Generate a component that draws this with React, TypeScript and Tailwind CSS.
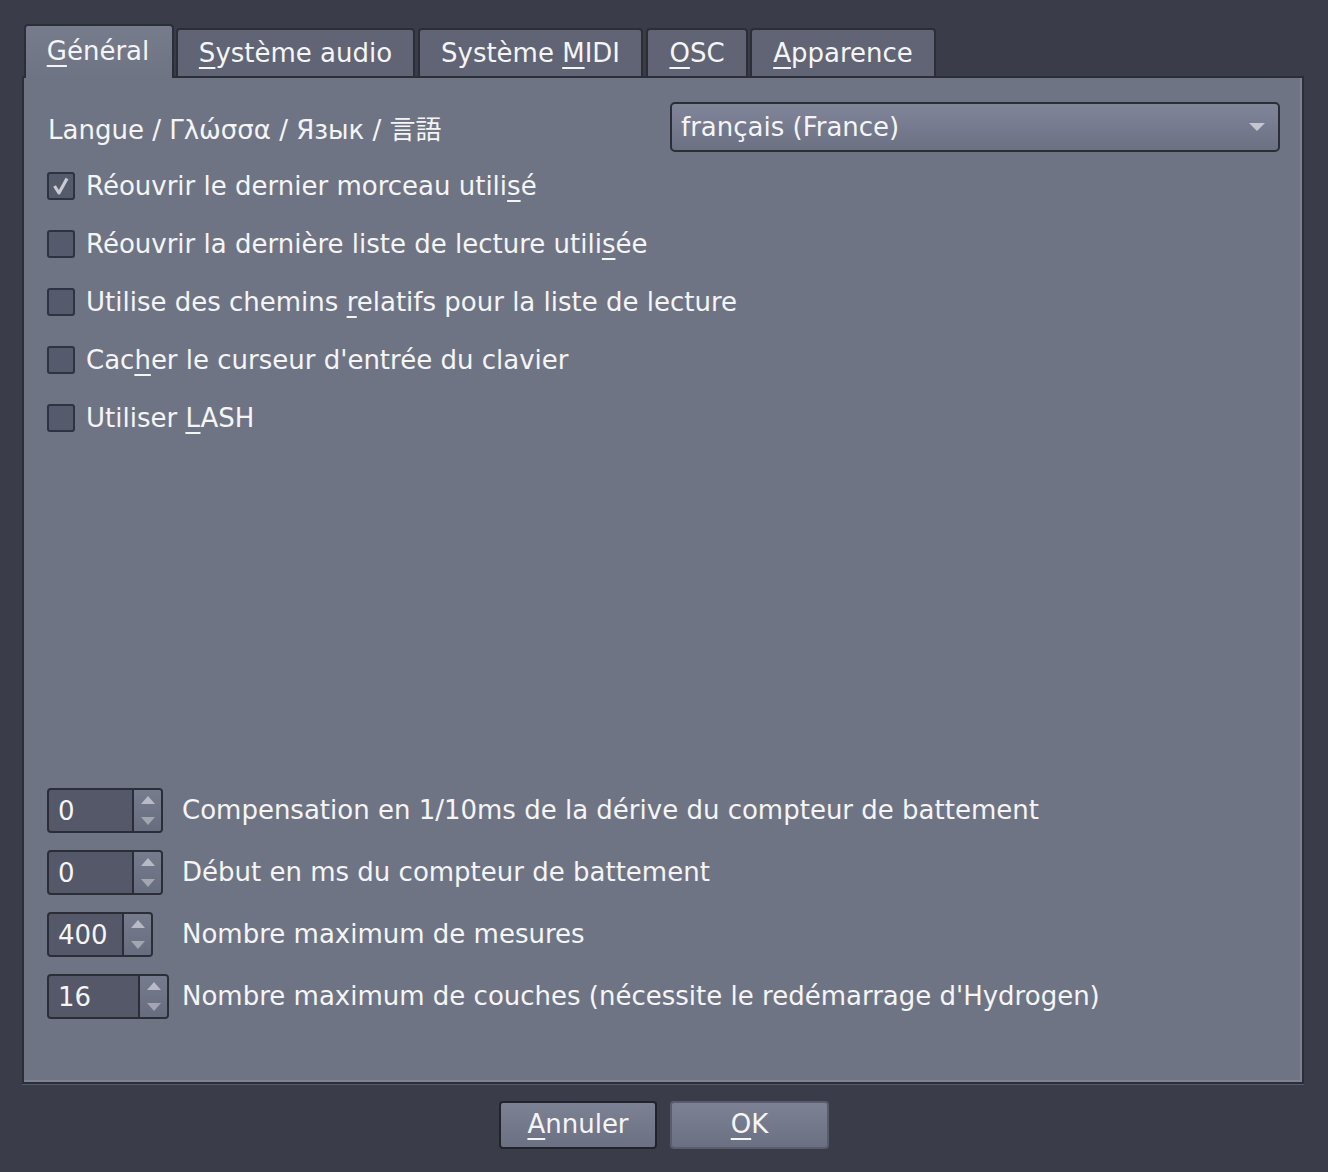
import React from "react";

const font = "font-['DejaVu_Sans','Noto_Sans_CJK_JP',sans-serif]";

function M({ children }: { children: React.ReactNode }) {
  return <span className="underline decoration-2 underline-offset-[5px]">{children}</span>;
}

const tabs = [
  { key: "gen", w: "w-[150px]", label: <><M>G</M>énéral</>, active: true },
  { key: "audio", w: "w-[239px] ml-[2px]", label: <><M>S</M>ystème audio</> },
  { key: "midi", w: "w-[225px] ml-[3px]", label: <>Système <M>M</M>IDI</> },
  { key: "osc", w: "w-[102px] ml-[3px]", label: <><M>O</M>SC</> },
  { key: "app", w: "w-[186px] ml-[2px]", label: <><M>A</M>pparence</> },
];

const checks = [
  { label: <>Réouvrir le dernier morceau utili<M>s</M>é</>, on: true },
  { label: <>Réouvrir la dernière liste de lecture utili<M>s</M>ée</> },
  { label: <>Utilise des chemins <M>r</M>elatifs pour la liste de lecture</> },
  { label: <>Cac<M>h</M>er le curseur d'entrée du clavier</> },
  { label: <>Utiliser <M>L</M>ASH</> },
];

const spins = [
  { value: "0", w: "w-[116px]", label: "Compensation en 1/10ms de la dérive du compteur de battement" },
  { value: "0", w: "w-[116px]", label: "Début en ms du compteur de battement" },
  { value: "400", w: "w-[106px]", label: "Nombre maximum de mesures" },
  { value: "16", w: "w-[122px]", label: "Nombre maximum de couches (nécessite le redémarrage d'Hydrogen)" },
];

function Checkbox({ on }: { on?: boolean }) {
  return (
    <div className="flex h-[28px] w-[28px] shrink-0 items-center justify-center rounded-[3px] border-2 border-[#2f3240] bg-[#555a6c]">
      {on && (
        <svg width="20" height="20" viewBox="0 0 20 20">
          <path d="M3.5 10 L8 17 L16 2.5" fill="none" stroke="#c9cbd2" strokeWidth="3.2" strokeLinejoin="round" />
        </svg>
      )}
    </div>
  );
}

function SpinBox({ value, w }: { value: string; w: string }) {
  return (
    <div className={`flex h-[45px] ${w} overflow-hidden rounded-[4px] border-2 border-[#2b2d37] bg-[#545869]`}>
      <div className="flex flex-1 items-center pl-[9px] leading-none">{value}</div>
      <div className="flex w-[29px] flex-col border-l-2 border-[#2b2d37] bg-gradient-to-b from-[#767b8d] to-[#676c7e]">
        <div className="flex flex-1 items-center justify-center">
          <svg width="14" height="8" viewBox="0 0 14 8"><path d="M0 8 L7 0 L14 8 Z" fill="#b8bbc5" /></svg>
        </div>
        <div className="flex flex-1 items-center justify-center">
          <svg width="14" height="8" viewBox="0 0 14 8"><path d="M0 0 L14 0 L7 8 Z" fill="#a3a6b1" /></svg>
        </div>
      </div>
    </div>
  );
}

export default function App() {
  return (
    <div className={`flex h-[1172px] w-[1328px] flex-col bg-[#3a3d49] pl-[22px] pr-[24px] pt-[24px] text-[26px] text-[#f5f5f5] ${font}`}>
      <div className="relative z-10 -mb-[2px] flex h-[54px] items-end pl-[2px]">
        {tabs.map((t) =>
          t.active ? (
            <div
              key={t.key}
              className={`flex h-[54px] ${t.w} items-start justify-center rounded-t-[4px] border-2 border-b-0 border-[#2b2d37] bg-gradient-to-b from-[#777c8d] to-[#6f7485] pr-[2px] pt-[6px]`}
            >
              <span>{t.label}</span>
            </div>
          ) : (
            <div
              key={t.key}
              className={`flex h-[50px] ${t.w} items-center justify-center rounded-t-[4px] border-2 border-[#2b2d37] bg-[#606475]`}
            >
              <span>{t.label}</span>
            </div>
          )
        )}
      </div>

      <div className="flex h-[1008px] flex-col border-2 border-[#2b2d37] bg-[#6f7485] pl-[23px] pr-[22px] pt-[24px] pb-[63px] shadow-[inset_-2px_-2px_0_#7d8295]">
        <div className="flex h-[50px] items-center justify-between">
          <div className="pl-[1px] pt-[6px]">Langue / Γλώσσα / Язык / 言語</div>
          <div className="flex h-[50px] w-[610px] items-center justify-between rounded-[5px] border-2 border-[#2b2d37] bg-gradient-to-b from-[#80859a] to-[#6b7083] pl-[9px] pr-[13px]">
            <span>français (France)</span>
            <svg width="16" height="8" viewBox="0 0 16 8"><path d="M0 0 L16 0 L8 8 Z" fill="#c3c6ce" /></svg>
          </div>
        </div>

        <div className="mt-[5px] flex flex-col">
          {checks.map((c, i) => (
            <div key={i} className="flex h-[58px] items-center gap-[11px]">
              <Checkbox on={c.on} />
              <span>{c.label}</span>
            </div>
          ))}
        </div>

        <div className="flex-1" />

        <div className="flex flex-col gap-[17px]">
          {spins.map((s, i) => (
            <div key={i} className="flex h-[45px] items-center">
              <div className="w-[135px] shrink-0">
                <SpinBox value={s.value} w={s.w} />
              </div>
              <span>{s.label}</span>
            </div>
          ))}
        </div>
      </div>
      <div className="h-[1px] bg-[#555a6a]" />

      <div className="mt-[16px] flex justify-center gap-[13px] pl-[2px]">
        <button className="flex h-[48px] w-[158px] items-center justify-center rounded-[4px] border-2 border-[#22242c] bg-gradient-to-b from-[#7c8194] to-[#6b7083] pb-[2px]">
          <span><M>A</M>nnuler</span>
        </button>
        <button className="flex h-[48px] w-[159px] items-center justify-center rounded-[4px] border-2 border-[#585c6d] bg-gradient-to-b from-[#7c8194] to-[#6b7083] pb-[2px]">
          <span><M>O</M>K</span>
        </button>
      </div>
    </div>
  );
}
